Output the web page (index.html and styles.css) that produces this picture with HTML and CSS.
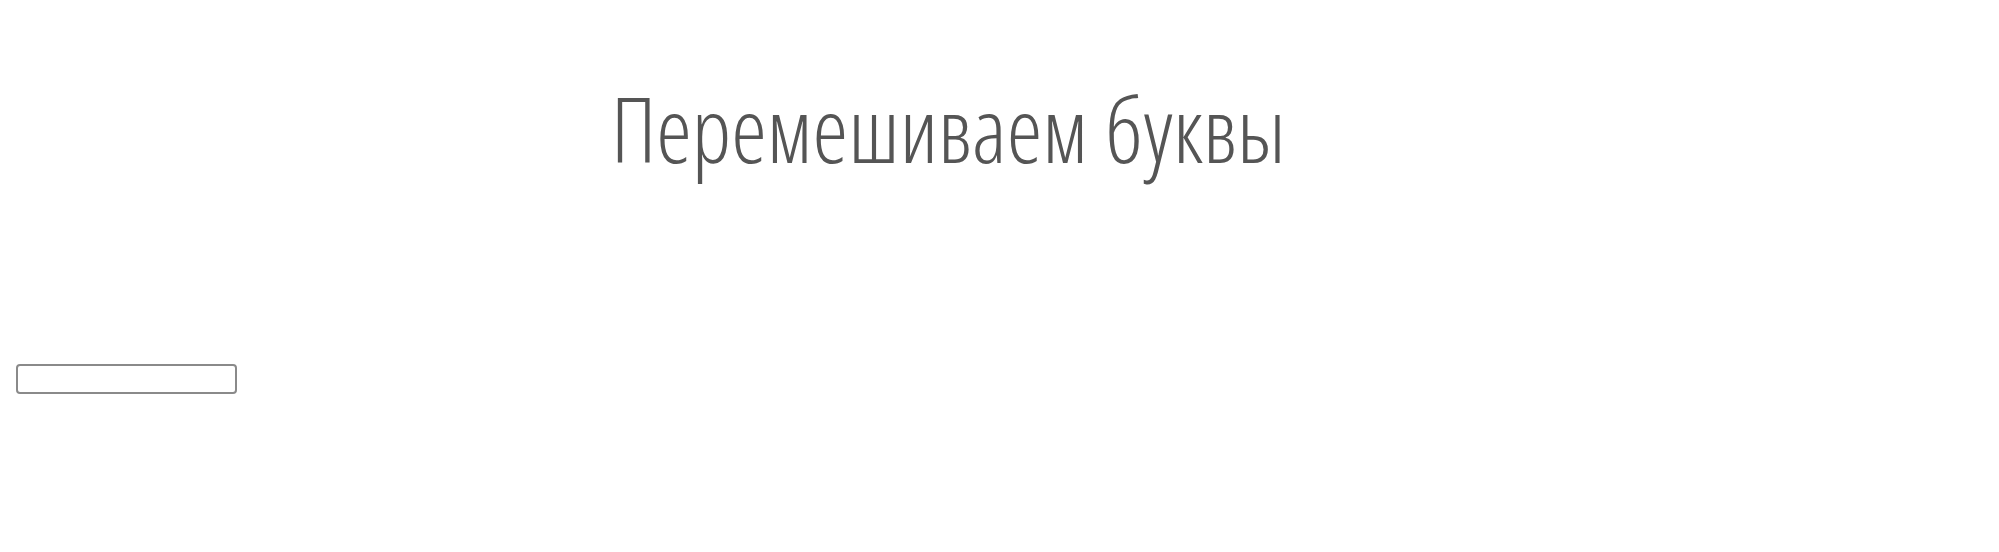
FILE: index.html
```html
<!DOCTYPE html>
<html lang="ru">
<head>
<meta charset="utf-8">
<title>Перемешиваем буквы</title>
<link rel="stylesheet" href="styles.css">
</head>
<body>
<h1 class="title">Перемешиваем буквы</h1>
<div class="field-row"><input class="word-input" type="text"></div>
</body>
</html>
```
FILE: styles.css
```css
html, body {
  margin: 0;
  padding: 0;
  background: #fff;
}
body {
  font-family: "Open Sans", "Liberation Sans", sans-serif;
}
.title {
  margin: 0;
  padding: 78px 0 0 611px;
  font-family: "Open Sans", sans-serif;
  font-weight: 300;
  font-stretch: 75%;
  font-size: 90px;
  line-height: 100px;
  color: #555;
  white-space: nowrap;
}
.field-row {
  padding: 186px 0 0 16px;
  line-height: 0;
}
.word-input {
  box-sizing: border-box;
  width: 221px;
  height: 30px;
  margin: 0;
  border: 2px solid #8a8a8a;
  border-radius: 4px;
  background: #fff;
  padding: 2px 6px;
  font-size: 18px;
}
```
